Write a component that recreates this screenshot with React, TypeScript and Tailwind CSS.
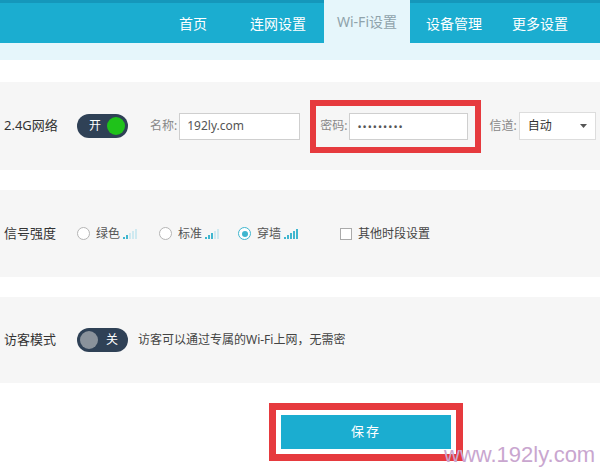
import React from 'react';

const font = { fontFamily: '"Noto Sans", "Noto Sans CJK SC", sans-serif' };

function Bars({ on }: { on: number }) {
  const hs = [2, 4, 6, 8, 10];
  return (
    <svg width="15" height="10" viewBox="0 0 15 10" className="ml-[3px]">
      {hs.map((h, i) => (
        <rect key={i} x={i * 3} y={10 - h} width="2" height={h} fill={i < on ? '#3fb6cf' : '#cfe9f0'} />
      ))}
    </svg>
  );
}

function Radio({ checked, label, on }: { checked?: boolean; label: string; on: number }) {
  return (
    <div className="flex items-center">
      <span className={`w-[13px] h-[13px] rounded-full border ${checked ? 'border-[#3fb6cf]' : 'border-[#b5b5b5]'} bg-white flex items-center justify-center`}>
        {checked && <span className="w-[6px] h-[6px] rounded-full bg-[#3fb6cf]" />}
      </span>
      <span className="ml-[6px] text-[12px] text-[#555]">{label}</span>
      <Bars on={on} />
    </div>
  );
}

export default function App() {
  const tabs = ['首页', '连网设置', 'Wi-Fi设置', '设备管理', '更多设置'];
  const widths = ['w-[78px]', 'w-[92px]', 'w-[86px]', 'w-[88px]', 'w-[84px]'];
  return (
    <div className="relative w-[600px] h-[470px] bg-white overflow-hidden" style={font}>
      {/* top nav */}
      <div className="h-[43px] bg-[#1badd0] border-t-[3px] border-[#1597bb] flex justify-end pr-[18px]">
        {tabs.map((t, i) =>
          i === 2 ? (
            <div key={t} className="w-[86px] -mt-[3px] h-[43px] bg-[#e6f6fb] flex items-center justify-center text-[14px] text-[#8fa3ab]">{t}</div>
          ) : (
            <div key={t} className={`h-full flex items-center justify-center text-[14px] text-white ${widths[i]}`}>{t}</div>
          )
        )}
      </div>
      <div className="h-[17px] bg-[#e6f6fb]" />
      <div className="h-[22px]" />

      {/* 2.4G row */}
      <div className="h-[88px] bg-[#f6f6f6] flex items-center pl-[4px]">
        <span className="w-[73px] text-[13px] text-[#333]">2.4G网络</span>
        <div className="w-[51px] h-[24px] rounded-full bg-[#2f4156] flex items-center justify-between pl-[12px] pr-[3px]">
          <span className="text-[12px] text-white">开</span>
          <span className="w-[18px] h-[18px] rounded-full bg-[#1fc21a]" />
        </div>
        <span className="ml-[22px] text-[12px] text-[#888]">名称:</span>
        <div className="ml-[2px] w-[121px] h-[27px] bg-white border border-[#cfcfcf] flex items-center pl-[7px] text-[12px] text-[#555]">192ly.com</div>
        <div className="ml-[10px] h-[53px] border-[6px] border-[#e63a3e] bg-[#f6f6f6] flex items-center pl-[4px] pr-[7px]">
          <span className="text-[12px] text-[#888]">密码:</span>
          <div className="ml-[2px] w-[119px] h-[27px] bg-white border border-[#cfcfcf] flex items-center pl-[7px] text-[11px] tracking-[1px] text-[#555] leading-none">•••••••••</div>
        </div>
        <span className="ml-[8px] text-[12px] text-[#888]">信道:</span>
        <div className="ml-[2px] w-[77px] h-[28px] bg-white border border-[#ddd] flex items-center justify-between pl-[8px] pr-[8px] text-[12px] text-[#333]">
          <span>自动</span>
          <svg width="7" height="4" viewBox="0 0 7 4"><path d="M0 0h7L3.5 4z" fill="#555" /></svg>
        </div>
      </div>
      <div className="h-[20px]" />

      {/* signal row */}
      <div className="h-[87px] bg-[#f6f6f6] flex items-center pl-[4px]">
        <span className="w-[73px] text-[13px] text-[#333]">信号强度</span>
        <Radio label="绿色" on={2} />
        <div className="ml-[21px]"><Radio label="标准" on={3} /></div>
        <div className="ml-[18px]"><Radio label="穿墙" on={5} checked /></div>
        <div className="ml-[41px] flex items-center">
          <span className="w-[12px] h-[12px] border border-[#aaa] bg-white" />
          <span className="ml-[6px] text-[12px] text-[#444]">其他时段设置</span>
        </div>
      </div>
      <div className="h-[20px]" />

      {/* guest row */}
      <div className="h-[86px] bg-[#f6f6f6] flex items-center pl-[4px]">
        <span className="w-[73px] text-[13px] text-[#333]">访客模式</span>
        <div className="w-[51px] h-[24px] rounded-full bg-[#2f4156] flex items-center pl-[3px] pr-[10px] justify-between">
          <span className="w-[18px] h-[18px] rounded-full bg-[#8a929b]" />
          <span className="text-[12px] text-white">关</span>
        </div>
        <span className="ml-[10px] text-[12px] text-[#444]">访客可以通过专属的Wi-Fi上网，无需密</span>
      </div>
      <div className="h-[20px]" />

      {/* save */}
      <div className="pl-[269px]">
        <div className="w-[194px] h-[58px] border-[7px] border-[#e63a3e] bg-white flex items-center justify-center">
          <button className="w-[170px] h-[34px] bg-[#1badd0] text-white text-[13px] tracking-[2px]">保存</button>
        </div>
      </div>

      <div className="absolute left-[444px] top-[438px] text-[22px] text-[#c9a6cf]" style={{ fontFamily: '"Liberation Sans", Arial, sans-serif' }}>
        www.192ly.com
      </div>
    </div>
  );
}
